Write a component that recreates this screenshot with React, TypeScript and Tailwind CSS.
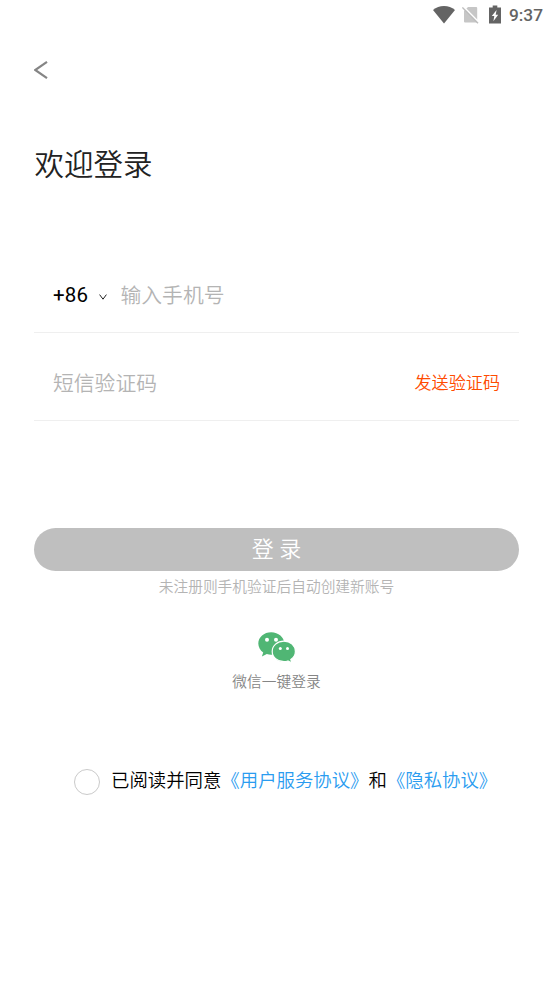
import React from "react";

function StatusBar() {
  return (
    <div className="flex h-8 items-start justify-end pr-[10px] text-[#646464]">
      <svg className="mt-[6px] h-[18px] w-[22px]" viewBox="0 0 22 18" fill="currentColor">
        <path d="M0 3.9C3.2 1.3 6.8 0 11 0s7.8 1.3 11 3.9L11 17.6z" />
      </svg>
      <svg className="mt-[6px] ml-[7px] h-[18px] w-[17px]" viewBox="0 0 17 18">
        <path d="M6 1h8.2q1 0 1 1v14.5H3q-1 0-1-1V5z" fill="#c6c6c6" />
        <path d="M1.2 .4L17 16.4" stroke="#fff" strokeWidth="1.6" />
        <path d="M.4 1.4L16 17.2" stroke="#bcbcbc" strokeWidth="1.4" />
      </svg>
      <svg className="mt-[5px] ml-[10px] h-[19px] w-[12px]" viewBox="0 0 12 19" fill="currentColor">
        <path d="M3.7.5h4.6v2H12v16H0v-16h3.7z" />
        <path d="M7.6 5L2.8 11h2.5l-.9 5.2 4.8-6.4H6.7z" fill="#fff" />
      </svg>
      <span className="mt-[5px] ml-[8px] font-[Roboto] text-[17.3px] leading-[21px] font-medium">9:37</span>
    </div>
  );
}

function WechatIcon() {
  return (
    <svg className="h-[31px] w-[38px]" viewBox="0 0 38 31">
      <path
        d="M13.2.3C6 .3.3 5.2.3 11.6c0 3.6 1.9 6.8 4.9 8.9L3.9 24.4l4.9-2.4c1.4.4 2.9.7 4.4.7 7.2 0 13-5 13-11.2S20.4.3 13.2.3z"
        fill="#50b674"
      />
      <path
        d="M26 9.2c-6.7 0-11.8 4.5-11.8 10.2S19.3 29.6 26 29.6c1.3 0 2.7-.2 3.9-.6l4 2-1.1-3.5c2.8-1.9 4.6-4.8 4.6-8.1 0-5.7-5-10.2-11.4-10.2z"
        fill="#50b674"
        stroke="#fff"
        strokeWidth="1.2"
      />
      <circle cx="9" cy="7.8" r="2" fill="#fff" />
      <circle cx="18" cy="7.8" r="2" fill="#fff" />
      <circle cx="22.3" cy="16.6" r="1.5" fill="#fff" />
      <circle cx="29.5" cy="16.6" r="1.5" fill="#fff" />
    </svg>
  );
}

export default function App() {
  return (
    <div className="flex h-[983px] w-[553px] flex-col overflow-hidden bg-white font-['Noto_Sans_CJK_SC',sans-serif] font-[350] whitespace-nowrap">
      <StatusBar />

      <main className="flex flex-col px-[34px]">
        <button className="mt-[28px] flex h-5 w-5" aria-label="返回">
          <svg className="h-5 w-[14px]" viewBox="0 0 14 20" fill="none" stroke="#858585" strokeWidth="2.2">
            <path d="M13 1.8L1.2 10L13 18.2" />
          </svg>
        </button>

        <h1 className="mt-[62px] h-10 pl-[0.5px] text-[29.5px] leading-10 font-[350] text-[#222]">欢迎登录</h1>

        <div className="mt-[74px] flex h-[77px] border-b-[1.5px] border-[#efefef] pl-[19px] text-[20.8px] leading-[76px]">
          <span className="w-[46px] pt-[2px] font-[Roboto] text-[20.5px] leading-[74px] font-normal tracking-[0.2px] text-black">+86</span>
          <svg className="mt-[38px] h-[6px] w-[8px]" viewBox="0 0 8 6" fill="none" stroke="#222">
            <path d="M.6.6L4 5.2L7.4.6" />
          </svg>
          <span className="ml-[13.5px] text-[#b4b4b4]">输入手机号</span>
        </div>

        <div className="flex h-[88px] justify-between border-b-[1.5px] border-[#efefef] pr-[19px] pl-[19px] leading-[98px]">
          <span className="text-[20.8px] text-[#b4b4b4]">短信验证码</span>
          <button className="h-[98px] text-[17.1px] text-[#ff4b00]">发送验证码</button>
        </div>

        <button className="mt-[107px] h-[43px] rounded-full bg-[#bfbfbf] pb-[4px] text-[22px] leading-[39px] [word-spacing:0.6px] text-white">
          登 录
        </button>
        <p className="mt-[4px] text-center text-[14.72px] leading-[22px] text-[#b4b4b4]">未注册则手机验证后自动创建新账号</p>

        <div className="mt-[35px] flex flex-col items-center">
          <WechatIcon />
          <span className="mt-[7px] text-[14.72px] leading-[22px] text-[#858585]">微信一键登录</span>
        </div>

        <div className="mt-[73px] flex h-[32px] items-center pl-[40px]">
          <span className="mt-[2px] h-[26px] w-[26px] rounded-full border-[1.5px] border-[#cacaca]" />
          <p className="ml-[11px] pb-[4px] text-[18.4px] leading-7 text-black">
            已阅读并同意<a className="text-[#2a9cf0]">《用户服务协议》</a>和<a className="text-[#2a9cf0]">《隐私协议》</a>
          </p>
        </div>
      </main>
    </div>
  );
}
